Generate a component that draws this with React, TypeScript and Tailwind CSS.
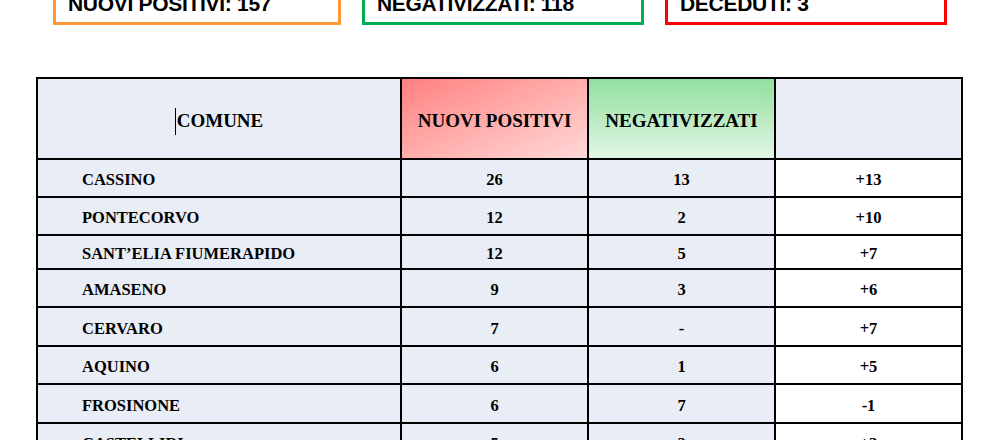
const totals = [
  { label: 'NUOVI POSITIVI: 157', border: 'border-[#ff9933]', width: 'w-[288px]' },
  { label: 'NEGATIVIZZATI: 118', border: 'border-[#00b050]', width: 'w-[282px]' },
  { label: 'DECEDUTI: 3', border: 'border-[#ff0000]', width: 'w-[282px]' },
]

const rows = [
  { comune: 'CASSINO', pos: '26', neg: '13', diff: '+13', h: 'h-[38px]' },
  { comune: 'PONTECORVO', pos: '12', neg: '2', diff: '+10', h: 'h-[38px]' },
  { comune: 'SANT’ELIA FIUMERAPIDO', pos: '12', neg: '5', diff: '+7', h: 'h-[34px]' },
  { comune: 'AMASENO', pos: '9', neg: '3', diff: '+6', h: 'h-[38px]' },
  { comune: 'CERVARO', pos: '7', neg: '-', diff: '+7', h: 'h-[39px]' },
  { comune: 'AQUINO', pos: '6', neg: '1', diff: '+5', h: 'h-[38px]' },
  { comune: 'FROSINONE', pos: '6', neg: '7', diff: '-1', h: 'h-[39px]' },
  { comune: 'CASTELLIRI', pos: '5', neg: '2', diff: '+3', h: 'h-[38px]' },
]

const cell = 'flex items-center pt-[5px] border-r-2 border-b-2 border-black'

export default function App() {
  return (
    <div className="w-[990px] h-[440px] overflow-hidden bg-white">
      <div className="flex gap-[21px] pl-[53px] -mt-[20px]">
        {totals.map((t) => (
          <div
            key={t.label}
            className={`${t.width} h-[45px] border-[3px] ${t.border} flex items-end pl-3 pb-[8px]`}
          >
            <span className="font-['Liberation_Sans',sans-serif] font-bold text-[21px] leading-none tracking-[-0.3px] text-black">
              {t.label}
            </span>
          </div>
        ))}
      </div>

      <div className="mt-[52px] ml-[36px] w-[927px] border-l-2 border-t-2 border-black font-['Liberation_Serif',serif] font-bold text-black">
        <div className="grid grid-cols-[364px_187px_187px_187px] h-[81px] text-[19px]">
          <div className={`${cell} justify-center bg-[#e9edf5]`}>
            <span className="inline-block w-px h-[27px] bg-black mr-px" />
            <span>COMUNE</span>
          </div>
          <div className={`${cell} justify-center bg-linear-to-br from-[#ff8080] to-[#ffd8d8]`}>
            NUOVI POSITIVI
          </div>
          <div className={`${cell} justify-center bg-linear-to-b from-[#92df9f] to-[#e1f5e4]`}>
            NEGATIVIZZATI
          </div>
          <div className={`${cell} bg-[#e9edf5]`} />
        </div>

        {rows.map((r) => (
          <div key={r.comune} className={`grid grid-cols-[364px_187px_187px_187px] ${r.h} text-[16.5px]`}>
            <div className={`${cell} pl-[44px] bg-[#e9edf5]`}>{r.comune}</div>
            <div className={`${cell} justify-center bg-[#e9edf5]`}>{r.pos}</div>
            <div className={`${cell} justify-center bg-[#e9edf5]`}>{r.neg}</div>
            <div className={`${cell} justify-center bg-white`}>{r.diff}</div>
          </div>
        ))}
      </div>
    </div>
  )
}
